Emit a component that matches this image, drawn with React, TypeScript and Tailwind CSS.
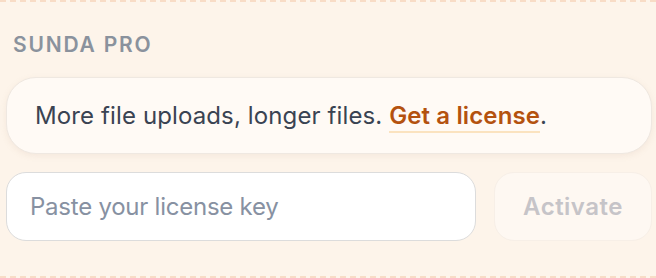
export default function App() {
  return (
    <div
      className="w-[656px] h-[278px] bg-[#fdf4ea] border-y-2 border-dashed border-[#f8dcc6] pl-[6px] pr-[4px] pt-[29px]"
      style={{ fontFamily: 'Inter, "Noto Sans", sans-serif' }}
    >
      <h3 className="pl-[7px] text-[21px] leading-[28px] font-semibold tracking-[0.085em] text-[#8a929d]">
        SUNDA PRO
      </h3>
      <div className="mt-[18px] h-[77px] rounded-[30px] bg-[#fffaf5] border border-[#efe8e1] shadow-[0_2px_6px_rgba(180,150,120,0.12)] flex items-center pl-[28px]">
        <p className="text-[24px] text-[#3a4352] tracking-[0.005em]">
          More file uploads, longer files.{' '}
          <a className="text-[#b4520f] font-semibold border-b-2 border-[#fbe3c0] pb-[1px]">
            Get a license
          </a>
          .
        </p>
      </div>
      <div className="mt-[18px] flex gap-[18px]">
        <input
          placeholder="Paste your license key"
          className="w-[470px] h-[69px] rounded-[20px] bg-white border-[1.5px] border-[#dcdcdc] pl-[23px] text-[24px] tracking-[-0.01em] text-[#3a4352] placeholder:text-[#8791a2] outline-none"
        />
        <button className="w-[158px] h-[69px] rounded-[20px] bg-[#fef8f2] border border-[#f7efe7] text-[24px] font-semibold tracking-[0.02em] text-[#c6c4c8]">
          Activate
        </button>
      </div>
    </div>
  );
}
